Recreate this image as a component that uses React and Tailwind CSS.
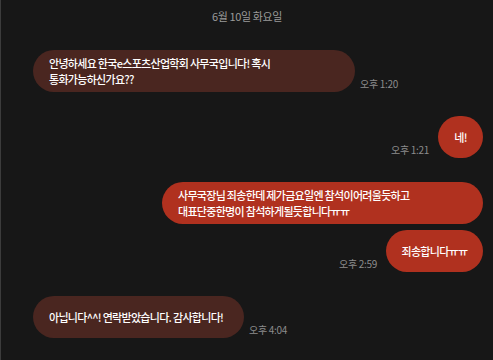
import React from "react";

const font = { fontFamily: '"Noto Sans CJK KR", "Noto Sans", sans-serif' };

function Received({ children, time, className }) {
  return (
    <div className="flex items-end pl-[32px]">
      <div
        className={`h-[42px] flex items-center rounded-full bg-[#4a2620] text-white text-[11px] font-medium leading-[16px] tracking-[-0.7px] whitespace-nowrap ${className}`}
      >
        <p>{children}</p>
      </div>
      <span className="ml-[5px] mb-[1px] text-[10px] leading-[14px] tracking-[-0.3px] text-[#8c8c8c]">
        {time}
      </span>
    </div>
  );
}

function Sent({ children, time, className }) {
  return (
    <div className="flex items-end justify-end pr-[10px]">
      {time && (
        <span className="mr-[9px] mb-[1px] text-[10px] leading-[14px] tracking-[-0.3px] text-[#8c8c8c]">
          {time}
        </span>
      )}
      <div
        className={`h-[42px] flex items-center rounded-full bg-[#b0311f] text-white text-[11px] font-medium leading-[16px] tracking-[-0.7px] whitespace-nowrap ${className}`}
      >
        <p>{children}</p>
      </div>
    </div>
  );
}

export default function App() {
  return (
    <div
      className="w-[493px] h-[360px] bg-[#171717] border-l border-[#3c3c3c] overflow-hidden"
      style={font}
    >
      <div className="pt-[8px] text-center text-[11px] leading-[16px] tracking-[-0.4px] text-[#9a9a9a]">
        6월 10일 화요일
      </div>
      <div className="flex flex-col pt-[26px]">
        <Received time="오후 1:20" className="w-[322px] pl-[16px]">
          안녕하세요 한국e스포츠산업학회 사무국입니다! 혹시
          <br />
          통화가능하신가요??
        </Received>
        <div className="mt-[24px]">
          <Sent time="오후 1:21" className="w-[45px] justify-center">
            네!
          </Sent>
        </div>
        <div className="mt-[24px]">
          <Sent time="" className="w-[321px] pl-[16px]">
            사무국장님 죄송한데 제가금요일엔 참석이어려울듯하고
            <br />
            대표단중한명이 참석하게될듯합니다ㅠㅠ
          </Sent>
        </div>
        <div className="mt-[6px]">
          <Sent time="오후 2:59" className="w-[97px] justify-center">
            죄송합니다ㅠㅠ
          </Sent>
        </div>
        <div className="mt-[24px]">
          <Received time="오후 4:04" className="w-[211px] pl-[16px]">
            아닙니다^^! 연락받았습니다. 감사합니다!
          </Received>
        </div>
      </div>
    </div>
  );
}
